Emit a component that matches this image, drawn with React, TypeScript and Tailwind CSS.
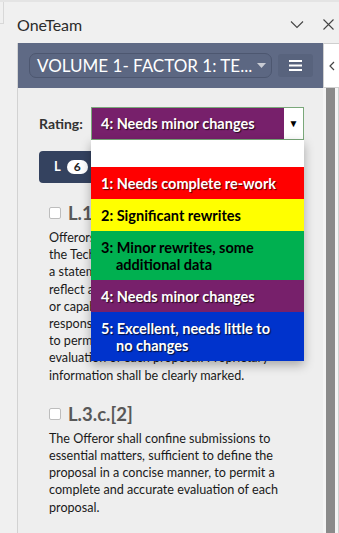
import React from "react";

const font = { fontFamily: "Lato, 'Open Sans', sans-serif" };

function Section({ title, lines }: { title: string; lines: string[] }) {
  return (
    <div className="mt-[18px] pl-[31px] pr-[20px]">
      <div className="flex items-center h-[24px] mb-[4px]">
        <span className="w-[12px] h-[12px] rounded-[2px] border border-[#bdbdbd] bg-white shrink-0" />
        <span className="ml-[7px] text-[18.5px] font-bold text-[#585858] leading-[24px]">{title}</span>
      </div>
      <p className="text-[12.6px] leading-[17.2px] text-[#1a1a1a]">
        {lines.map((l, i) => (
          <span key={i} className="block whitespace-nowrap">
            {l}
          </span>
        ))}
      </p>
    </div>
  );
}

const items: { n: string; t: string; cls: string }[] = [
  { n: "1:", t: "Needs complete re-work", cls: "bg-[#ff0000] text-white [text-shadow:1px_1px_1px_rgba(0,0,0,0.7)]" },
  { n: "2:", t: "Significant rewrites", cls: "bg-[#ffff00] text-black" },
  { n: "3:", t: "Minor rewrites, some additional data", cls: "bg-[#00b050] text-black" },
  { n: "4:", t: "Needs minor changes", cls: "bg-[#77206b] text-white [text-shadow:1px_1px_1px_rgba(0,0,0,0.7)]" },
  { n: "5:", t: "Excellent, needs little to no changes", cls: "bg-[#0033cc] text-white [text-shadow:1px_1px_1px_rgba(0,0,0,0.7)]" },
];

export default function App() {
  return (
    <div style={font} className="w-[339px] h-[533px] overflow-hidden bg-[#f0f0f0] flex flex-col border-t-2 border-[#e4e4e4]">
      {/* Title bar */}
      <div className="h-[41px] shrink-0 flex items-center pl-[17px] pr-[5px] relative">
        <div className="absolute left-0 top-0 w-[4px] h-[22px] border-r border-b border-[#d8d8d8]" />
        <span className="text-[16px] text-[#2b2b2b] leading-none mt-[4px]">OneTeam</span>
        <div className="ml-auto flex items-center gap-[19px] mt-[4px]">
          <svg width="14" height="9" viewBox="0 0 14 9" fill="none" stroke="#444" strokeWidth="1.1">
            <path d="M1 1.5 L7 7.5 L13 1.5" />
          </svg>
          <svg width="11" height="11" viewBox="0 0 11 11" fill="none" stroke="#444" strokeWidth="1.1">
            <path d="M0.5 0.5 L10.5 10.5 M10.5 0.5 L0.5 10.5" />
          </svg>
        </div>
      </div>

      <div className="flex flex-1 min-h-0">
        {/* left gutter */}
        <div className="w-[17px] shrink-0" />

        {/* panel */}
        <div className="w-[306px] shrink-0 flex flex-col border-l border-[#d2d2d2]">
          <div className="h-[45px] shrink-0 bg-[#5f6a85] flex items-center pl-[11px] pr-[9px]">
            <div className="w-[243px] h-[25px] rounded-[7px] border border-[#4d5770] bg-[#5c6782] flex items-center pl-[7px] pr-[5px]">
              <span className="text-[17px] text-white leading-none whitespace-nowrap">VOLUME 1- FACTOR 1: TE...</span>
              <svg className="ml-auto" width="9" height="5" viewBox="0 0 9 5" fill="#c9ccd4">
                <path d="M0 0 L9 0 L4.5 5 Z" />
              </svg>
            </div>
            <div className="ml-[6px] w-[35px] h-[23px] bg-[#58637d] rounded-[3px] flex items-center justify-center">
              <svg width="13" height="11" viewBox="0 0 13 11" fill="white">
                <rect x="0" y="0" width="13" height="2" />
                <rect x="0" y="4.5" width="13" height="2" />
                <rect x="0" y="9" width="13" height="2" />
              </svg>
            </div>
          </div>

          <div className="flex-1 bg-[#eeeeee] relative">
            {/* rating row */}
            <div className="pt-[19px] pl-[21px] flex items-center">
              <span className="text-[14px] font-bold text-[#333] w-[52px]">Rating:</span>
              <div className="relative w-[213px]">
                <div className="h-[33px] border border-[#7aa87a] flex bg-white">
                  <div className="flex-1 bg-[#77206b] flex items-center pl-[9px] text-[14.5px] font-bold text-white [text-shadow:1px_1px_1px_rgba(0,0,0,0.7)]">
                    4: Needs minor changes
                  </div>
                  <div className="w-[19px] flex items-center justify-center text-[10px] text-black">▼</div>
                </div>
                <div className="absolute left-0 top-[33px] w-[213px] bg-white shadow-[0_4px_10px_rgba(0,0,0,0.3)] z-10">
                  <div className="h-[27px] bg-white" />
                  {items.map((it) => (
                    <div key={it.n} className={`${it.cls} text-[14.5px] font-bold leading-[17px] py-[7.5px] pl-[25px] pr-[17px] -indent-[15px]`}>
                      {it.n} {it.t}
                    </div>
                  ))}
                </div>
              </div>
            </div>

            {/* tab badge */}
            <div className="mt-[11px] ml-[21px] h-[32px] w-[70px] rounded-[4px] bg-[#34425f] flex items-center pl-[15px]">
              <span className="text-white text-[13px] font-bold">L</span>
              <span className="ml-[6px] h-[14px] w-[21px] rounded-full bg-white text-[#222] text-[12px] font-bold flex items-center justify-center">6</span>
            </div>

            <Section
              title="L.1.a"
              lines={[
                "Offerors shall submit a proposal for",
                "the Technical Factor that includes",
                "a statement of work. Proposals shall",
                "reflect a clear understanding of the",
                "or capabilities of the Offeror. Elaborate",
                "responses are not desired, in order",
                "to permit a complete and accurate",
                "evaluation of each proposal. Proprietary",
                "information shall be clearly marked.",
              ]}
            />
            <Section
              title="L.3.c.[2]"
              lines={[
                "The Offeror shall confine submissions to",
                "essential matters, sufficient to define the",
                "proposal in a concise manner, to permit a",
                "complete and accurate evaluation of each",
                "proposal.",
              ]}
            />
          </div>
        </div>

        {/* right column */}
        <div className="flex-1 flex flex-col">
          <div className="h-[45px] shrink-0 bg-white border border-[#cfcfcf] border-r-0 flex items-center justify-center">
            <svg width="6" height="10" viewBox="0 0 6 10" fill="none" stroke="#444" strokeWidth="1.2">
              <path d="M5 1 L1 5 L5 9" />
            </svg>
          </div>
          <div className="flex-1 flex">
            <div className="w-[3px] bg-[#f4f4f4]" />
            <div className="w-[9px] bg-[#8a8a8a]" />
            <div className="w-[3px] bg-[#f4f4f4]" />
            <div className="w-[1px] bg-[#d0d0d0]" />
          </div>
        </div>
      </div>
    </div>
  );
}
